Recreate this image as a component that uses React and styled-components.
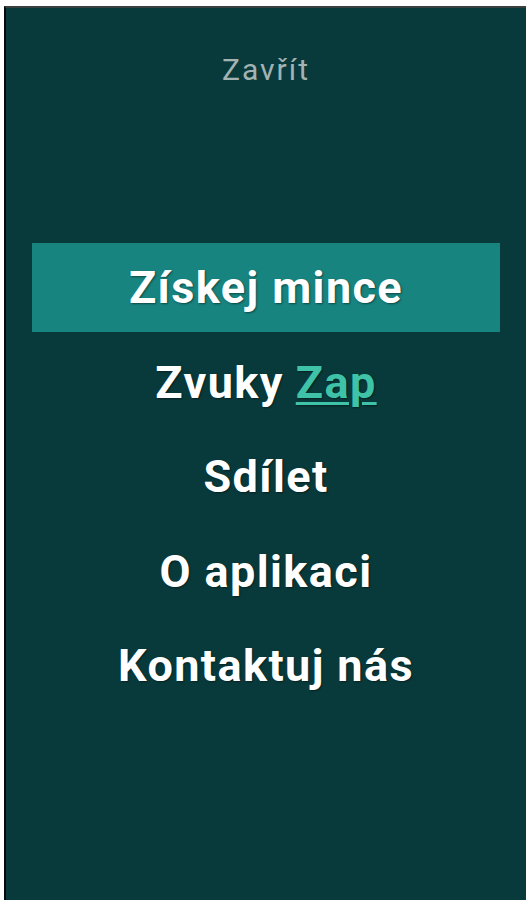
import React, { useState } from 'react'
import styled, { createGlobalStyle } from 'styled-components'

const Global = createGlobalStyle`
    html, body {
        margin: 0;
        padding: 0;
        background: #ffffff;
    }
    body {
        font-family: Roboto, "Noto Sans", sans-serif;
    }
`

const Frame = styled.div`
    height: 900px;
    box-sizing: border-box;
    padding: 6px 0 0 4px;
    display: flex;
`

const Panel = styled.div`
    flex: 1;
    display: flex;
    flex-direction: column;
    align-items: center;
    background: #093a3b;
    border-top: 2px solid #3a3f3f;
    border-left: 2px solid #050909;
`

const Close = styled.button`
    margin-top: 44px;
    background: none;
    border: none;
    padding: 0;
    font-family: Roboto, sans-serif;
    font-size: 30px;
    letter-spacing: 2px;
    color: #a3b3b3;
    cursor: pointer;
`

const Menu = styled.div`
    margin-top: 156px;
    width: 100%;
    display: flex;
    flex-direction: column;
    align-items: center;
    gap: 5.5px;
`

const Item = styled.div`
    width: 468px;
    height: 89px;
    display: flex;
    align-items: center;
    justify-content: center;
    background: ${p => (p.$active ? '#17847f' : 'transparent')};
    color: #ffffff;
    font-family: Roboto, sans-serif;
    font-weight: 700;
    font-size: 45px;
    letter-spacing: 1.4px;
    text-shadow: 1px 1px 2px rgba(0, 0, 0, 0.45);
    cursor: pointer;
`

const Toggle = styled.span`
    color: #3ec3a8;
    text-decoration: underline;
    text-decoration-thickness: 3px;
    text-underline-offset: 4px;
    margin-left: 12px;
`

export default function App() {
    let [sound, setSound] = useState(true)
    return (
        <Frame>
            <Global />
            <Panel>
                <Close>Zavřít</Close>
                <Menu>
                    <Item $active>Získej mince</Item>
                    <Item onClick={() => setSound(!sound)}>
                        Zvuky<Toggle>{sound ? 'Zap' : 'Vyp'}</Toggle>
                    </Item>
                    <Item>Sdílet</Item>
                    <Item>O aplikaci</Item>
                    <Item>Kontaktuj nás</Item>
                </Menu>
            </Panel>
        </Frame>
    )
}
